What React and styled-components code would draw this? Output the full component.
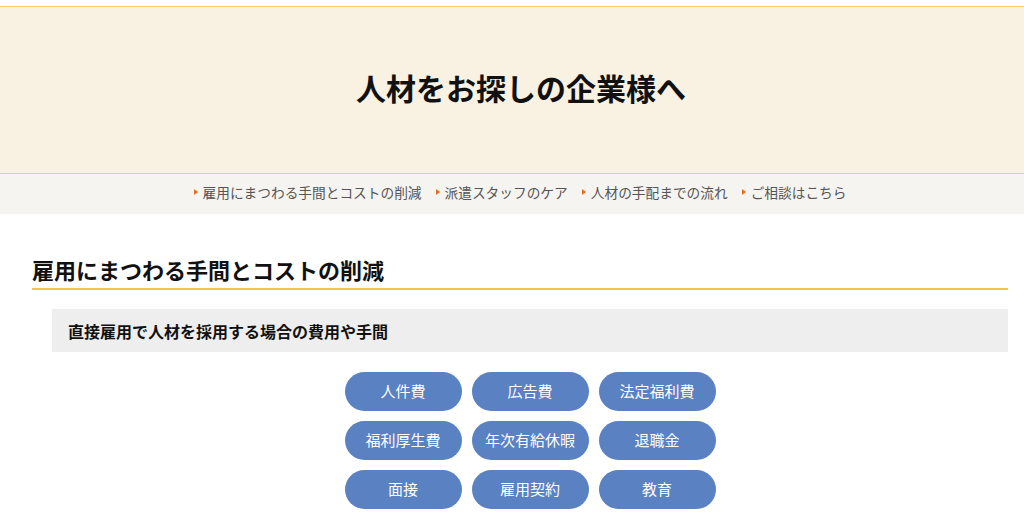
import React from 'react';
import styled, { createGlobalStyle } from 'styled-components';

const GlobalStyle = createGlobalStyle`
  html, body {
    margin: 0;
    padding: 0;
    background: #fff;
  }
  body {
    font-family: "Noto Sans CJK JP", "Noto Sans", sans-serif;
    color: #222;
  }
`;

const Page = styled.div`
  padding-top: 6px;
`;

const Hero = styled.header`
  background-color: #f9f1e1;
  border-top: 1px solid #fccd6b;
  border-bottom: 1px solid #fccd6b;
  box-sizing: border-box;
  height: 168px;
  display: flex;
  align-items: center;
  justify-content: center;
  padding: 0 0 6px 18px;
`;

const HeroTitle = styled.h1`
  margin: 0;
  font-size: 30px;
  font-weight: 700;
  color: #111;
`;

const Nav = styled.nav`
  background-color: #f5f4f0;
  height: 40px;
  box-sizing: border-box;
  padding: 0 0 5px 16px;
  display: flex;
  align-items: center;
  justify-content: center;
  gap: 14px;
`;

const NavItem = styled.a`
  display: flex;
  align-items: center;
  font-size: 13.7px;
  color: #555;
  text-decoration: none;
  &::before {
    content: '';
    display: inline-block;
    width: 0;
    height: 0;
    border-top: 3px solid transparent;
    border-bottom: 3px solid transparent;
    border-left: 4px solid #ee6a1d;
    margin-right: 5px;
  }
`;

const Main = styled.main`
  padding: 40px 16px 0 32px;
`;

const SectionTitle = styled.h2`
  margin: 0;
  font-size: 22px;
  font-weight: 700;
  color: #111;
  padding-bottom: 3px;
  border-bottom: 2px solid #fdc24a;
  line-height: 31px;
`;

const SubBox = styled.div`
  margin: 19px 0 0 20px;
  background-color: #eeeeee;
  height: 43px;
  display: flex;
  align-items: center;
  padding-left: 16px;
`;

const SubTitle = styled.h3`
  margin: 0;
  font-size: 16px;
  font-weight: 700;
  color: #111;
`;

const Grid = styled.div`
  margin: 20px 0 0 20px;
  display: grid;
  grid-template-columns: repeat(3, 117px);
  gap: 10px 10px;
  justify-content: center;
`;

const Pill = styled.div`
  height: 39px;
  border-radius: 20px;
  background-color: #5a81c2;
  color: #fff;
  font-size: 15px;
  display: flex;
  align-items: center;
  justify-content: center;
  padding-bottom: 2px;
  box-sizing: border-box;
`;

const navItems = [
  '雇用にまつわる手間とコストの削減',
  '派遣スタッフのケア',
  '人材の手配までの流れ',
  'ご相談はこちら',
];

const costs = [
  '人件費', '広告費', '法定福利費',
  '福利厚生費', '年次有給休暇', '退職金',
  '面接', '雇用契約', '教育',
];

export default function App() {
  return (
    <Page>
      <GlobalStyle />
      <Hero>
        <HeroTitle>人材をお探しの企業様へ</HeroTitle>
      </Hero>
      <Nav>
        {navItems.map((t) => (
          <NavItem key={t} href="#">{t}</NavItem>
        ))}
      </Nav>
      <Main>
        <SectionTitle>雇用にまつわる手間とコストの削減</SectionTitle>
        <SubBox>
          <SubTitle>直接雇用で人材を採用する場合の費用や手間</SubTitle>
        </SubBox>
        <Grid>
          {costs.map((c) => (
            <Pill key={c}>{c}</Pill>
          ))}
        </Grid>
      </Main>
    </Page>
  );
}
